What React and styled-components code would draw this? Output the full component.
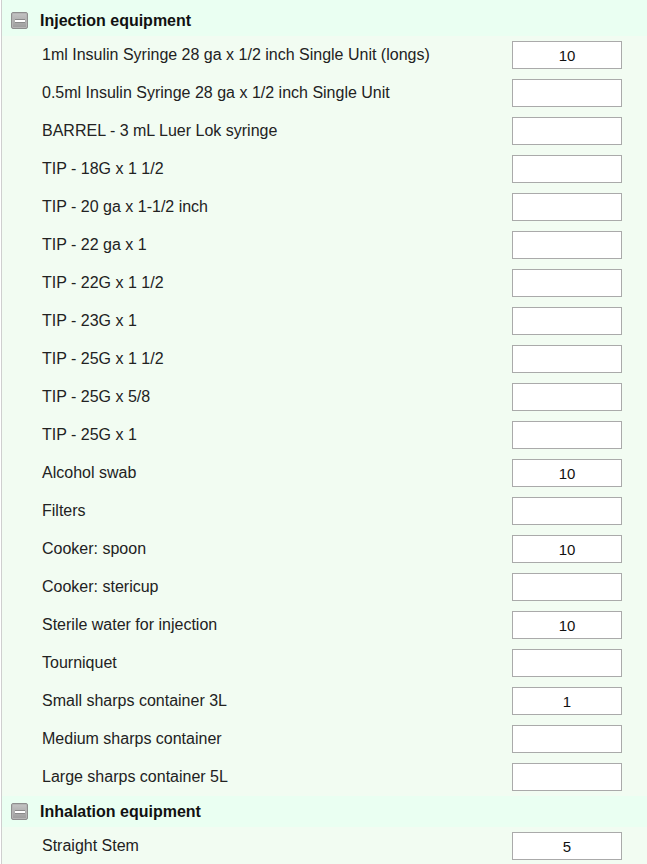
import React from "react";
import styled, { createGlobalStyle } from "styled-components";

const GlobalStyle = createGlobalStyle`
  html, body {
    margin: 0;
    padding: 0;
    background: #ffffff;
  }
  body {
    font-family: "Liberation Sans", Arial, sans-serif;
  }
`;

const sections = [
  {
    title: "Injection equipment",
    items: [
      { name: "1ml Insulin Syringe 28 ga x 1/2 inch Single Unit (longs)", qty: "10" },
      { name: "0.5ml Insulin Syringe 28 ga x 1/2 inch Single Unit", qty: "" },
      { name: "BARREL - 3 mL Luer Lok syringe", qty: "" },
      { name: "TIP - 18G x 1 1/2", qty: "" },
      { name: "TIP - 20 ga x 1-1/2 inch", qty: "" },
      { name: "TIP - 22 ga x 1", qty: "" },
      { name: "TIP - 22G x 1 1/2", qty: "" },
      { name: "TIP - 23G x 1", qty: "" },
      { name: "TIP - 25G x 1 1/2", qty: "" },
      { name: "TIP - 25G x 5/8", qty: "" },
      { name: "TIP - 25G x 1", qty: "" },
      { name: "Alcohol swab", qty: "10" },
      { name: "Filters", qty: "" },
      { name: "Cooker: spoon", qty: "10" },
      { name: "Cooker: stericup", qty: "" },
      { name: "Sterile water for injection", qty: "10" },
      { name: "Tourniquet", qty: "" },
      { name: "Small sharps container 3L", qty: "1" },
      { name: "Medium sharps container", qty: "" },
      { name: "Large sharps container 5L", qty: "" },
    ],
  },
  {
    title: "Inhalation equipment",
    items: [{ name: "Straight Stem", qty: "5" }],
  },
];

const Page = styled.div`
  margin-left: 1px;
  border-left: 1px solid #cfcfcf;
  min-height: 864px;
  background: #f2fcf2;
`;

const SectionHeader = styled.div`
  display: flex;
  align-items: center;
  gap: 12px;
  height: 31px;
  padding: ${(p) => (p.$first ? "5px" : "0")} 0 0 9px;
  background: #eafff2;
`;

const ToggleIcon = styled.span`
  display: flex;
  align-items: center;
  justify-content: center;
  width: 15px;
  height: 15px;
  border: 1px solid #8e8e8e;
  border-radius: 2px;
  background: linear-gradient(#c4c4c4, #9c9c9c);
  box-shadow: inset 0 0 0 1px #b5b5b5;

  &::after {
    content: "";
    width: 10px;
    height: 2px;
    background: #ffffff;
    border: 1px solid #8a8a8a;
    border-left: none;
    border-right: none;
  }
`;

const SectionTitle = styled.span`
  font-size: 16px;
  font-weight: bold;
  color: #111;
`;

const Row = styled.div`
  display: flex;
  align-items: center;
  justify-content: space-between;
  height: 38px;
  padding: 0 25px 0 40px;
  background: #f2fcf2;
`;

const Label = styled.span`
  font-size: 16px;
  color: #222;
  margin-top: -1px;
`;

const QtyInput = styled.input`
  box-sizing: border-box;
  width: 110px;
  height: 28px;
  border: 1px solid #aaaaaa;
  background: #ffffff;
  font-family: "Liberation Sans", Arial, sans-serif;
  font-size: 15px;
  color: #111;
  text-align: center;
  padding: 0;
  outline: none;
`;

export default function App() {
  return (
    <>
      <GlobalStyle />
      <Page>
        {sections.map((section, i) => (
          <div key={section.title}>
            <SectionHeader $first={i === 0}>
              <ToggleIcon />
              <SectionTitle>{section.title}</SectionTitle>
            </SectionHeader>
            {section.items.map((item) => (
              <Row key={item.name}>
                <Label>{item.name}</Label>
                <QtyInput type="text" defaultValue={item.qty} />
              </Row>
            ))}
          </div>
        ))}
      </Page>
    </>
  );
}
